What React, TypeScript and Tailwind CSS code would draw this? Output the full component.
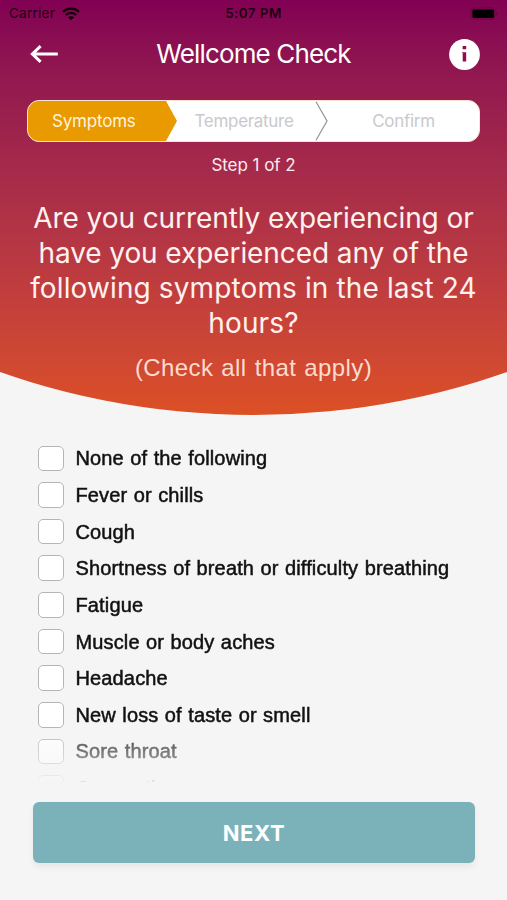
import { useState } from 'react';

const QUESTION_LINES = [
  { text: 'Are you currently experiencing or', tracking: 'tracking-[-0.08px]' },
  { text: 'have you experienced any of the', tracking: 'tracking-[-0.08px]' },
  { text: 'following symptoms in the last 24', tracking: 'tracking-[0.12px]' },
  { text: 'hours?', tracking: 'tracking-[0.12px]' },
];

const SYMPTOMS = [
  'None of the following',
  'Fever or chills',
  'Cough',
  'Shortness of breath or difficulty breathing',
  'Fatigue',
  'Muscle or body aches',
  'Headache',
  'New loss of taste or smell',
  'Sore throat',
  'Congestion or runny nose',
];

function StatusBar() {
  return (
    <div className="grid h-[27px] grid-cols-3 items-center pl-[9px] pr-[9px] text-[13.5px] leading-none text-black/80">
      <div className="flex items-center gap-[7px]">
        <span className="pt-[1px] tracking-[0.25px]">Carrier</span>
        <svg width="18" height="14" viewBox="0 0 18 14" fill="none" stroke="black" strokeOpacity="0.85">
          <path d="M1 4.8C5.5 .6 12.5 .6 17 4.8" strokeWidth="2.4" />
          <path d="M3.8 8C6.8 5.2 11.2 5.2 14.2 8" strokeWidth="2.2" />
          <path d="M9 13.2L6 10.3C7.7 8.9 10.3 8.9 12 10.3Z" fill="black" stroke="none" />
        </svg>
      </div>
      <span className="pt-[1px] text-center font-semibold tracking-[0.4px]">5:07 PM</span>
      <svg className="justify-self-end" width="28" height="13" viewBox="0 0 28 13">
        <rect x="0.9" y="0.9" width="24" height="11.2" rx="3" fill="none" stroke="black" strokeOpacity="0.2" />
        <rect x="2.4" y="2.4" width="21.6" height="8.6" rx="1.4" fill="black" />
        <path d="M26 4.6c1.4.4 1.4 3.4 0 3.8z" fill="black" fillOpacity="0.25" />
      </svg>
    </div>
  );
}

function NavBar() {
  return (
    <div className="flex h-[54px] items-center justify-between pl-[30px] pr-[27px] text-white">
      <button aria-label="Back">
        <svg width="28" height="18" viewBox="0 0 28 18" fill="none" stroke="white" strokeWidth="3">
          <path d="M27.8 9H2.4M10.6 1.2L2.4 9l8.2 7.8" />
        </svg>
      </button>
      <h1 className="text-[26px] font-normal leading-none tracking-[-0.85px]">Wellcome Check</h1>
      <button aria-label="Info">
        <svg width="31" height="31" viewBox="0 0 31 31">
          <circle cx="15.5" cy="15.5" r="15.4" fill="white" />
          <path d="M13.6 7.1h3.6v3.2h-3.6zM13.1 13.2h4.1v9.3h-3.5v-8.5h-.6z" fill="#8f0f4b" />
        </svg>
      </button>
    </div>
  );
}

function Stepper() {
  return (
    <div className="mx-[27px] mt-[19px] flex h-[42px] overflow-hidden rounded-[12px] border border-[#fbe3cf] bg-white text-[17px] text-[#c9c9cb]">
      <div className="flex w-[149px] items-center bg-[#e89a00] pl-[24px] pt-[2px] tracking-[-0.2px] text-[#fff3dc] [clip-path:polygon(0_0,138px_0,100%_50%,138px_100%,0_100%)]">
        Symptoms
      </div>
      <div className="flex flex-1 items-center justify-center pr-[4px] pt-[2px] tracking-[-0.3px]">Temperature</div>
      <svg width="13" height="40" viewBox="0 0 13 40" fill="none" stroke="#98989c" strokeWidth="1.3">
        <path d="M1 .8L12 20 1 39.2" />
      </svg>
      <div className="flex w-[151px] items-center justify-center pt-[2px] tracking-[-0.3px]">Confirm</div>
    </div>
  );
}

export default function App() {
  const [checked, setChecked] = useState<string[]>([]);

  const toggle = (symptom: string) => {
    setChecked((prev) =>
      prev.includes(symptom) ? prev.filter((s) => s !== symptom) : [...prev, symptom]
    );
  };

  return (
    <div className="flex h-[900px] w-[507px] flex-col overflow-hidden bg-[#f5f5f5] font-['Inter',sans-serif]">
      <header className="h-[415px] shrink-0 bg-linear-to-b from-[#820053] to-[#dc5024] [clip-path:circle(769px_at_50%_-354px)]">
        <StatusBar />
        <NavBar />
        <Stepper />
        <p className="mt-[11px] text-center text-[17px] leading-[24px] tracking-[-0.05px] text-[#fdeaf0]">Step 1 of 2</p>
        <h2 className="mt-[24px] text-center text-[28px] font-normal leading-[35px] text-[#fff1ee]">
          {QUESTION_LINES.map((line) => (
            <span key={line.text} className={`block whitespace-nowrap ${line.tracking}`}>
              {line.text}
            </span>
          ))}
        </h2>
        <p className="mt-[12px] text-center font-['Liberation_Sans',Arial,sans-serif] text-[24px] leading-[30px] tracking-[0.4px] text-[#fddccf] [word-spacing:1px]">
          (Check all that apply)
        </p>
      </header>

      <main className="mt-[25px] h-[342px] shrink-0 overflow-hidden pl-[38px] [mask-image:linear-gradient(to_bottom,black_288px,rgba(0,0,0,0.65)_304px,rgba(0,0,0,0.48)_318px,transparent_346px)]">
        {SYMPTOMS.map((symptom) => (
          <label key={symptom} className="flex h-[36.65px] items-center gap-[12px]">
            <input
              type="checkbox"
              checked={checked.includes(symptom)}
              onChange={() => toggle(symptom)}
              className="size-[25.5px] shrink-0 appearance-none rounded-[5px] border-[1.5px] border-[#b5b5b5] bg-white checked:bg-[#7bb2ba]"
            />
            <span className="whitespace-nowrap font-['Liberation_Sans',Arial,sans-serif] text-[20px] leading-none tracking-[0.14px] text-[#111] [-webkit-text-stroke:0.5px_#111] [word-spacing:0.7px]">
              {symptom}
            </span>
          </label>
        ))}
      </main>

      <button className="ml-[33px] mr-[32px] mt-[20px] h-[61px] shrink-0 rounded-[6px] bg-[#7bb2ba] pt-[2px] text-[22px] font-bold tracking-[0.6px] text-white shadow-[0_4px_6px_rgba(0,0,0,0.06)]">
        NEXT
      </button>
    </div>
  );
}
